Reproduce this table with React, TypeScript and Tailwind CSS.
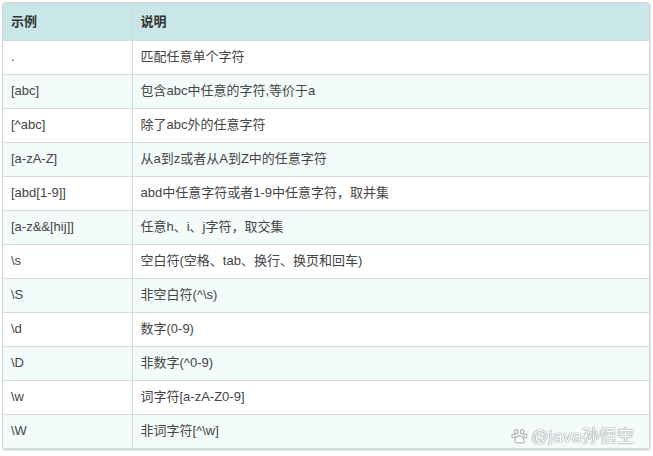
const rows: [string, string][] = [
  ['.', '匹配任意单个字符'],
  ['[abc]', '包含abc中任意的字符,等价于a'],
  ['[^abc]', '除了abc外的任意字符'],
  ['[a-zA-Z]', '从a到z或者从A到Z中的任意字符'],
  ['[abd[1-9]]', 'abd中任意字符或者1-9中任意字符，取并集'],
  ['[a-z&&[hij]]', '任意h、i、j字符，取交集'],
  ['\\s', '空白符(空格、tab、换行、换页和回车)'],
  ['\\S', '非空白符(^\\s)'],
  ['\\d', '数字(0-9)'],
  ['\\D', '非数字(^0-9)'],
  ['\\w', '词字符[a-zA-Z0-9]'],
  ['\\W', '非词字符[^\\w]'],
];

function Paw() {
  return (
    <svg width="17" height="17" viewBox="0 0 16 16" fill="white" stroke="#a9b0b1" strokeWidth="1">
      <ellipse cx="5" cy="3.5" rx="1.6" ry="2" />
      <ellipse cx="10.5" cy="3.5" rx="1.6" ry="2" />
      <ellipse cx="2.2" cy="7.5" rx="1.5" ry="1.8" />
      <ellipse cx="13.6" cy="7.5" rx="1.5" ry="1.8" />
      <path d="M8 7c-2 0-4.5 3-4.5 5 0 1.6 1.5 2.2 2.6 2 .8-.1 1.2-.4 1.9-.4s1.1.3 1.9.4c1.1.2 2.6-.4 2.6-2 0-2-2.5-5-4.5-5z" />
    </svg>
  );
}

export default function App() {
  return (
    <div
      className="relative w-[653px] h-[456px] bg-white pt-[2px] pl-[2px]"
      style={{ fontFamily: '"Liberation Sans", Arial, "Noto Sans CJK SC", sans-serif' }}
    >
      <div className="w-[648px] rounded-[3px] border border-[#cdd7d7] overflow-hidden shadow-[1px_1px_0_#e3e8e8]">
        <table className="w-full border-collapse text-[13px] text-[#444]">
          <thead>
            <tr className="h-[37px] bg-[#c9e6e8]">
              <th className="w-[129px] border-r border-b border-[#cfdcdc] pl-2 text-left font-bold text-[#333]">示例</th>
              <th className="border-b border-[#cfdcdc] pl-2 text-left font-bold text-[#333]">说明</th>
            </tr>
          </thead>
          <tbody>
            {rows.map(([a, b], i) => (
              <tr key={i} className={i % 2 === 0 ? 'h-[34px] bg-white' : 'h-[34px] bg-[#f4fbfb]'}>
                <td className="border-r border-b border-[#d3dcdc] pl-2">{a}</td>
                <td className="border-b border-[#d3dcdc] pl-2">{b}</td>
              </tr>
            ))}
          </tbody>
        </table>
      </div>
      <div className="absolute left-[511px] top-[424px] flex items-center gap-[3px] text-[17px] tracking-[0.5px] text-white [text-shadow:0_0_1px_#8f9798,0_0_1px_#8f9798,0_0_1px_#8f9798]">
        <Paw />
        <span>@java孙悟空</span>
      </div>
    </div>
  );
}
